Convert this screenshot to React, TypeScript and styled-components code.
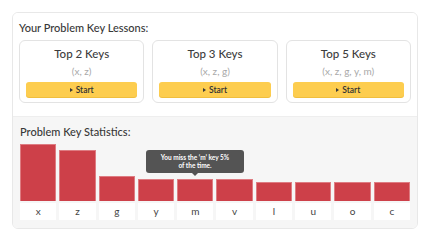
import * as React from 'react'
import styled, { createGlobalStyle } from 'styled-components'

const Global = createGlobalStyle`
  body {
    margin: 0;
    background: #ffffff;
    font-family: Lato, "Open Sans", sans-serif;
    color: #3d3d3d;
  }
`

const Card = styled.div`
  margin: 12px 0 0 12px;
  width: 406px;
  box-sizing: border-box;
  border: 1px solid #e8e8e8;
  border-radius: 6px;
  overflow: hidden;
`

const Lessons = styled.section`
  padding: 8px 6px 13px 6px;
  background: #ffffff;
`

const Heading = styled.h2`
  margin: 0;
  font-size: 11px;
  font-weight: 500;
  line-height: 14px;
  color: #383838;
`

const LessonRow = styled.div`
  display: grid;
  grid-template-columns: repeat(3, 1fr);
  gap: 8px;
  margin-top: 5px;
`

const Lesson = styled.div`
  height: 63px;
  box-sizing: border-box;
  border: 1px solid #e3e3e3;
  border-radius: 6px;
  padding: 6px 6px 0;
  display: flex;
  flex-direction: column;
  align-items: stretch;
  text-align: center;
`

const LessonTitle = styled.div`
  font-size: 11.5px;
  font-weight: 500;
  line-height: 14px;
  color: #3d3d3d;
`

const LessonKeys = styled.div`
  margin-top: 4px;
  font-size: 10px;
  line-height: 12px;
  color: #a9a9a9;
`

const StartButton = styled.button`
  margin-top: 5px;
  height: 15px;
  border: 0;
  border-radius: 3px;
  background: #fdcd4f;
  box-shadow: 0 1px 0 #f0be3e;
  font-family: inherit;
  font-size: 8.5px;
  font-weight: 600;
  color: #333333;
  padding: 0;
  display: flex;
  align-items: center;
  justify-content: center;
  gap: 3px;
`

const Arrow = styled.span`
  display: inline-block;
  width: 0;
  height: 0;
  border-top: 2.5px solid transparent;
  border-bottom: 2.5px solid transparent;
  border-left: 3px solid #3a3a3a;
`

const Stats = styled.section`
  background: #f6f6f6;
  border-top: 1px solid #eeeeee;
  padding: 8px 7px 8px 7px;
`

const Chart = styled.div`
  position: relative;
  display: grid;
  grid-template-columns: repeat(10, 1fr);
  gap: 3px;
  margin-top: 4px;
`

const Column = styled.div`
  display: flex;
  flex-direction: column;
  justify-content: flex-end;
  height: 77px;
`

const Bar = styled.div<{ $h: number }>`
  height: ${p => p.$h}px;
  box-sizing: border-box;
  background: #cd4049;
  border: 1px solid #de7c82;
  border-bottom: 0;
`

const Label = styled.div`
  margin-top: 2px;
  height: 17px;
  background: #ffffff;
  font-size: 10px;
  line-height: 16px;
  text-align: center;
  color: #444444;
`

const Tooltip = styled.div`
  position: absolute;
  left: 126px;
  top: 7px;
  width: 98px;
  height: 23px;
  box-sizing: border-box;
  background: #545454;
  border-radius: 3px;
  color: #ffffff;
  font-size: 6.5px;
  font-weight: 700;
  line-height: 8px;
  text-align: center;
  padding-top: 4px;

  &:after {
    content: '';
    position: absolute;
    left: 46px;
    bottom: -3px;
    border-left: 3px solid transparent;
    border-right: 3px solid transparent;
    border-top: 3px solid #545454;
  }
`

const lessons = [
  { title: 'Top 2 Keys', keys: '(x, z)' },
  { title: 'Top 3 Keys', keys: '(x, z, g)' },
  { title: 'Top 5 Keys', keys: '(x, z, g, y, m)' },
]

const stats = [
  { key: 'x', h: 57 },
  { key: 'z', h: 51 },
  { key: 'g', h: 25 },
  { key: 'y', h: 22 },
  { key: 'm', h: 22 },
  { key: 'v', h: 22 },
  { key: 'l', h: 19 },
  { key: 'u', h: 19 },
  { key: 'o', h: 19 },
  { key: 'c', h: 19 },
]

export default function App() {
  return (
    <>
      <Global />
      <Card>
        <Lessons>
          <Heading>Your Problem Key Lessons:</Heading>
          <LessonRow>
            {lessons.map(l => (
              <Lesson key={l.title}>
                <LessonTitle>{l.title}</LessonTitle>
                <LessonKeys>{l.keys}</LessonKeys>
                <StartButton>
                  <Arrow />
                  Start
                </StartButton>
              </Lesson>
            ))}
          </LessonRow>
        </Lessons>
        <Stats>
          <Heading>Problem Key Statistics:</Heading>
          <Chart>
            {stats.map(s => (
              <Column key={s.key}>
                <Bar $h={s.h} />
                <Label>{s.key}</Label>
              </Column>
            ))}
            <Tooltip>
              You miss the ‘m’ key 5%
              <br />
              of the time.
            </Tooltip>
          </Chart>
        </Stats>
      </Card>
    </>
  )
}
